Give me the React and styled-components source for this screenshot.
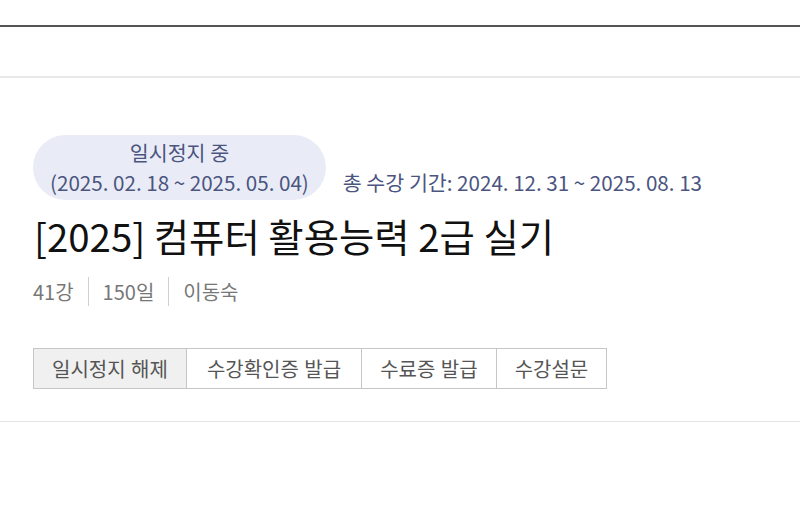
import React from "react"
import styled, { createGlobalStyle } from "styled-components"

const GlobalStyle = createGlobalStyle`
  html, body {
    margin: 0;
    padding: 0;
    background: #ffffff;
    font-family: "Noto Sans CJK KR", "Noto Sans", sans-serif;
  }
`

const TopBar = styled.header`
  height: 25px;
  border-bottom: 2px solid #555555;
`

const SubBar = styled.nav`
  height: 49px;
  border-bottom: 2px solid #e9e9e9;
`

const Course = styled.section`
  padding: 57px 33px 32px;
  border-bottom: 1px solid #e4e4e4;
`

const StatusRow = styled.div`
  display: flex;
  align-items: flex-end;
  gap: 17px;
`

const PausePill = styled.div`
  padding: 2px 17px 3px;
  border-radius: 33px;
  background: #e9ecf6;
  color: #4b557f;
  font-size: 20.6px;
  line-height: 30px;
  text-align: center;
`

const Period = styled.div`
  color: #4b557f;
  font-size: 20.6px;
  line-height: 30px;
  padding-bottom: 3px;
`

const Title = styled.h1`
  margin: 12px 0 0 1px;
  font-size: 38.4px;
  line-height: 46px;
  font-weight: 400;
  color: #111111;
`

const Meta = styled.ul`
  display: flex;
  align-items: center;
  list-style: none;
  margin: 19px 0 0;
  padding: 0;
`

const MetaItem = styled.li`
  font-size: 20px;
  line-height: 29px;
  color: #777777;
  padding: 0 14px;
  border-left: 1px solid #d2d2d2;

  &:first-child {
    padding-left: 0;
    border-left: none;
  }
`

const Actions = styled.div`
  display: flex;
  margin-top: 42px;
`

const ActionButton = styled.button`
  height: 41px;
  padding: 0 ${ ({ $wide }) => $wide ? "20px" : "18px" };
  margin-left: -1px;
  border: 1px solid #c6c6c6;
  background: ${ ({ $active }) => $active ? "#f0f0f0" : "#ffffff" };
  color: #555555;
  font-family: inherit;
  font-size: 20px;
  word-spacing: 1px;
  cursor: pointer;

  &:first-child {
    margin-left: 0;
  }
`

const actions = ["일시정지 해제", "수강확인증 발급", "수료증 발급", "수강설문"]
const meta = ["41강", "150일", "이동숙"]

export default function App() {
  return (
    <>
      <GlobalStyle />
      <TopBar />
      <SubBar />
      <Course>
        <StatusRow>
          <PausePill>
            일시정지 중<br />
            (2025. 02. 18 ~ 2025. 05. 04)
          </PausePill>
          <Period>총 수강 기간: 2024. 12. 31 ~ 2025. 08. 13</Period>
        </StatusRow>
        <Title>[2025] 컴퓨터 활용능력 2급 실기</Title>
        <Meta>
          { meta.map((item) => <MetaItem key={ item }>{ item }</MetaItem>) }
        </Meta>
        <Actions>
          { actions.map((label, index) => (
            <ActionButton key={ label } $active={ index === 0 } $wide={ index === 1 }>
              { label }
            </ActionButton>
          )) }
        </Actions>
      </Course>
    </>
  )
}
